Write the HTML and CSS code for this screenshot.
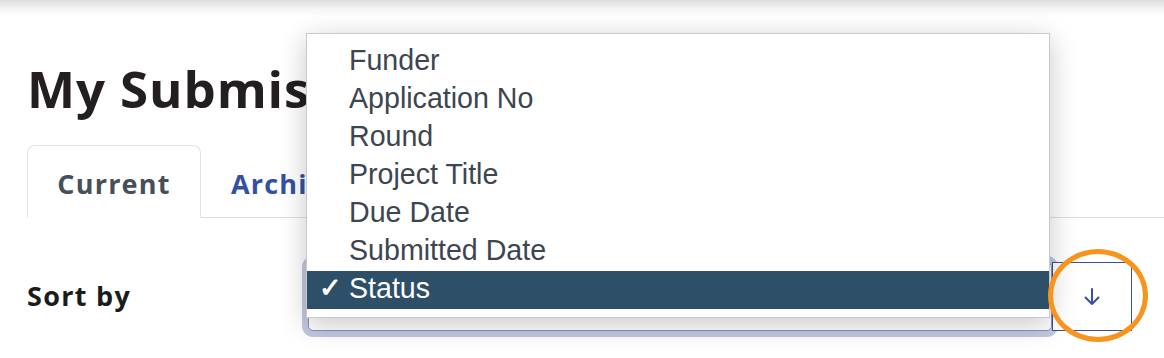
FILE: index.html
```html
<!DOCTYPE html>
<html lang="en">
<head>
<meta charset="utf-8">
<title>My Submissions</title>
<link rel="stylesheet" href="styles.css">
</head>
<body>
<div class="topshade"></div>
<main class="page">
  <h1 class="title">My Submissions</h1>
  <nav class="tabs">
    <a class="tab active">Current</a>
    <a class="tab">Archived</a>
  </nav>
  <div class="sortrow">
    <label class="sortlabel">Sort by</label>
    <div class="selectwrap"><div class="select"></div></div>
    <button class="dirbtn" aria-label="Sort direction">
      <svg width="18" height="20" viewBox="0 0 18 20" fill="none" stroke="#3a4fa0" stroke-width="2" stroke-linecap="round" stroke-linejoin="round"><path d="M9 2v15M2.5 10.5L9 17l6.5-6.5"/></svg>
    </button>
  </div>
</main>
<ul class="menu">
  <li>Funder</li>
  <li>Application No</li>
  <li>Round</li>
  <li>Project Title</li>
  <li>Due Date</li>
  <li>Submitted Date</li>
  <li class="selected"><span class="check">✓</span>Status</li>
</ul>
<div class="highlight-ring"></div>
</body>
</html>
```
FILE: styles.css
```css
html, body {
  margin: 0;
  padding: 0;
  background: #fff;
}
body {
  width: 1164px;
  height: 358px;
  overflow: hidden;
  position: relative;
  font-family: "Open Sans", "Liberation Sans", sans-serif;
}
.topshade {
  height: 16px;
  background: linear-gradient(to bottom, #dcdcdc 0%, #f3f3f3 50%, #ffffff 100%);
}
.page {
  padding: 0 0 0 27px;
}
.title {
  margin: 37px 0 0 0;
  font-size: 51px;
  line-height: 70px;
  font-weight: 700;
  color: #231f20;
  letter-spacing: 0.9px;
}
.tabs {
  display: flex;
  margin-top: 22px;
  border-bottom: 1px solid #d9dde5;
  height: 72px;
}
.tab {
  display: flex;
  align-items: center;
  padding: 4px 30px 0 30px;
  font-size: 27px;
  font-weight: 700;
  letter-spacing: 1.2px;
  color: #3450a4;
  height: 72px;
  box-sizing: border-box;
}
.tab.active {
  color: #464f5a;
  border: 1px solid #dfe2e8;
  border-bottom: 1px solid #fff;
  border-radius: 8px 8px 0 0;
  background: #fff;
  height: 73px;
  width: 174px;
  justify-content: center;
  padding: 4px 0 0 0;
}
.sortrow {
  display: flex;
  align-items: center;
  margin-top: 44px;
  height: 69px;
}
.sortlabel {
  font-size: 27px;
  font-weight: 700;
  letter-spacing: 1.3px;
  color: #1b1b1b;
  width: 281px;
  padding-bottom: 2px;
}
.selectwrap {
  flex: 1;
  height: 69px;
  position: relative;
}
.select {
  height: 67px;
  border: 1px solid #8590c4;
  border-radius: 5px;
  box-shadow: 0 0 0 6px #c3c8df;
  background: #fff;
}
.dirbtn {
  width: 80px;
  height: 69px;
  margin-right: 32px;
  border: 1px solid #3a4fa0;
  background: #fff;
  display: flex;
  align-items: center;
  justify-content: center;
  padding: 0;
  position: relative;
}
.menu {
  position: absolute;
  left: 306px;
  top: 33px;
  width: 744px;
  margin: 0;
  padding: 9px 0 8px 0;
  list-style: none;
  background: #fff;
  border: 1px solid #c9c9c9;
  box-sizing: border-box;
  box-shadow: 0 6px 26px rgba(0, 0, 0, 0.22);
  font-family: "Liberation Sans", Arial, sans-serif;
  font-size: 28.6px;
  color: #3d4550;
}
.menu li {
  height: 34px;
  line-height: 34px;
  padding: 0 0 4px 42px;
  position: relative;
}
.menu li.selected {
  background: #2d4f68;
  color: #fff;
}
.check {
  position: absolute;
  left: 12px;
  top: 0;
  font-size: 27px;
  font-weight: 700;
}
.highlight-ring {
  position: absolute;
  left: 1048px;
  top: 249px;
  width: 100px;
  height: 93px;
  box-sizing: border-box;
  border: 5px solid #f7941d;
  border-radius: 50%;
}
```
